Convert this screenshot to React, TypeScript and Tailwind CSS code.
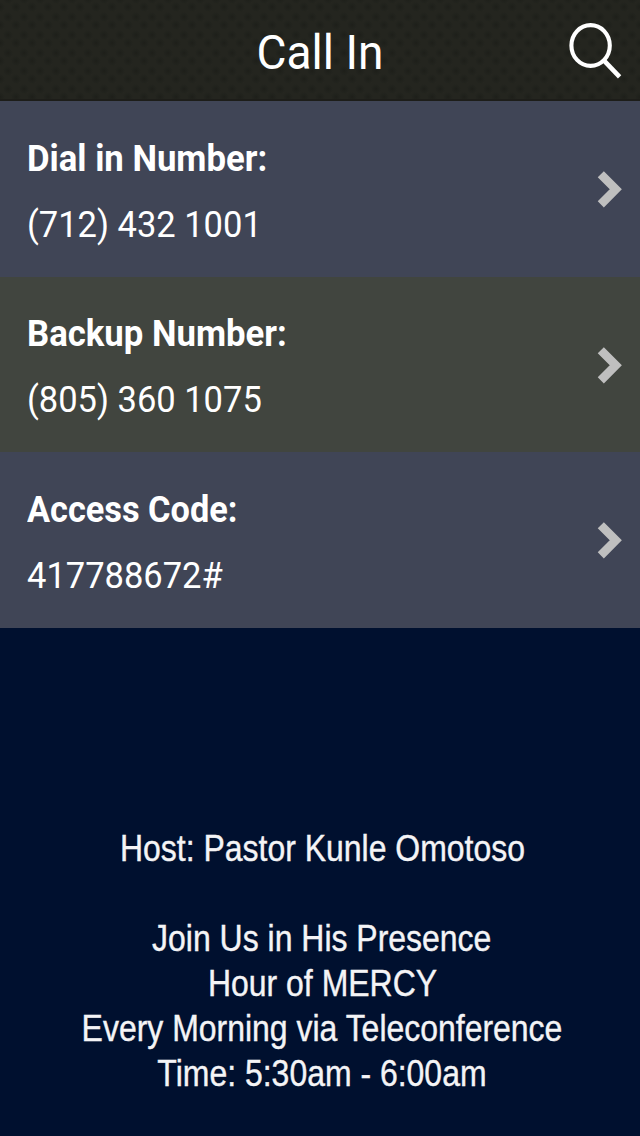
import { clsx } from "clsx";

const entries = [
  { label: "Dial in Number:", value: "(712) 432 1001", className: "h-44 bg-[#404556]", labelScale: "scale-x-[0.951]" },
  { label: "Backup Number:", value: "(805) 360 1075", className: "h-[175px] bg-[#41453f]", labelScale: "scale-x-[0.951]" },
  { label: "Access Code:", value: "417788672#", className: "h-44 bg-[#404556]", labelScale: "scale-x-[0.94]" },
];

const message = [
  { text: "Host: Pastor Kunle Omotoso", className: "mb-[45px]" },
  { text: "Join Us in His Presence" },
  { text: "Hour of MERCY" },
  { text: "Every Morning via Teleconference" },
  { text: "Time: 5:30am - 6:00am" },
];

function SearchIcon() {
  return (
    <svg viewBox="0 0 54 58" className="h-[58px] w-[54px]" fill="none" stroke="#fff">
      <ellipse cx="21.6" cy="23.5" rx="19.2" ry="20.4" strokeWidth="4.1" />
      <path d="M34.8 38.4 L50.6 54.8" strokeWidth="4.6" />
    </svg>
  );
}

function Chevron() {
  return (
    <svg viewBox="0 0 26 38" className="h-[38px] w-[26px]" fill="none" stroke="#bfbfbf">
      <path d="M3.8 4.2 L18.8 19.3 L3.8 34.4" strokeWidth="8.6" />
    </svg>
  );
}

function Header() {
  return (
    <header className="grid h-[101px] grid-cols-[80px_1fr_80px] items-center border-b-2 border-[#1d1d19] bg-[#24251f] bg-[radial-gradient(circle_at_50%_50%,#1e1f1a_0,transparent_5px),radial-gradient(circle_at_50%_50%,#1e1f1a_0,transparent_5px)] bg-[length:16px_18px] bg-[position:8px_16px,0px_8px]">
      <div />
      <h1 className="scale-x-[0.95] pt-2 text-center text-[48.5px] leading-none whitespace-nowrap">Call In</h1>
      <button type="button" aria-label="Search" className="flex justify-end pt-[2px] pr-[17px]">
        <SearchIcon />
      </button>
    </header>
  );
}

export default function App() {
  return (
    <div className="flex h-[1136px] w-[640px] flex-col overflow-hidden bg-[#00102f] font-['Roboto',sans-serif] text-white">
      <Header />
      <ul className="flex flex-col">
        {entries.map((entry) => (
          <li key={entry.label} className={clsx("flex items-center justify-between pr-[17px] pl-[27px]", entry.className)}>
            <div className="flex flex-col gap-[22px] pt-[5px] text-[36.5px] leading-[44px] whitespace-nowrap">
              <span className={clsx("origin-left font-bold", entry.labelScale)}>{entry.label}</span>
              <span className="origin-left scale-x-[0.945]">{entry.value}</span>
            </div>
            <Chevron />
          </li>
        ))}
      </ul>
      <section className="flex flex-1 flex-col items-center justify-end pb-10 pl-1 font-['Liberation_Sans',sans-serif] text-[36.7px] leading-[45px] text-[#f4f4f6] [-webkit-text-stroke:0.4px_#f4f4f6]">
        {message.map((line) => (
          <p key={line.text} className={clsx("scale-x-[0.871] whitespace-nowrap", line.className)}>
            {line.text}
          </p>
        ))}
      </section>
    </div>
  );
}
